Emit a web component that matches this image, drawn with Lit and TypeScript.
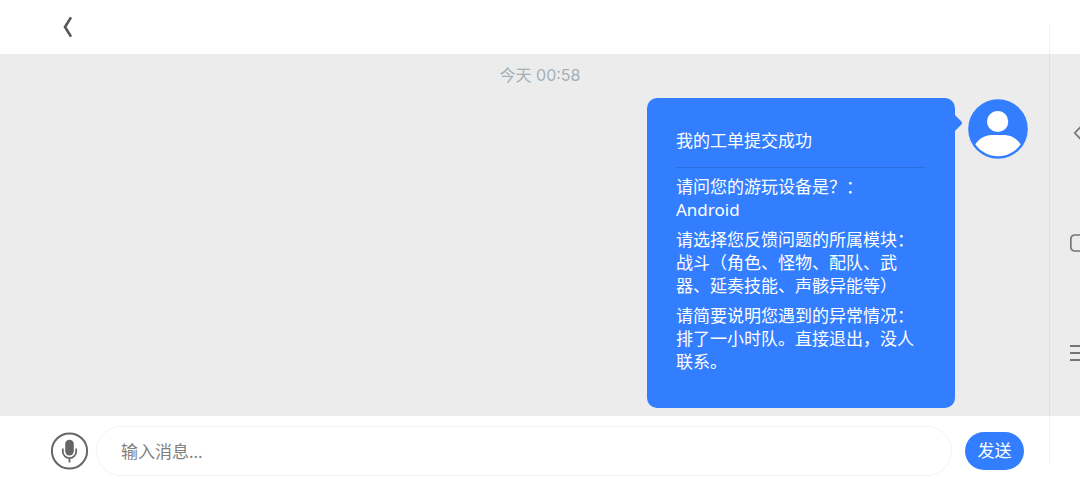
import { LitElement, html, css } from "lit";
import { customElement, state } from "lit/decorators.js";

interface Answer {
  question: string;
  value: string;
}

@customElement("ticket-bubble")
class TicketBubble extends LitElement {
  static styles = css`
    :host {
      display: block;
      position: relative;
      box-sizing: border-box;
      width: 308px;
      padding: 30px 29px 35px;
      border-radius: 10px;
      background: #337eff;
      color: #fff;
      font-size: 17px;
    }
    .tail {
      position: absolute;
      left: 100%;
      top: 16px;
      margin-left: -1px;
      display: block;
    }
    .title {
      margin: 0;
      padding-bottom: 13px;
      border-bottom: 1px solid #2d70e4;
      font-size: 17px;
      font-weight: 400;
      line-height: 26px;
    }
    .answers {
      display: flex;
      flex-direction: column;
      gap: 7px;
      margin: 0;
      padding-top: 7px;
      line-height: 23px;
    }
    .question,
    .value {
      margin: 0;
    }
  `;

  private answers: Answer[] = [
    { question: "请问您的游玩设备是？：", value: "Android" },
    {
      question: "请选择您反馈问题的所属模块：",
      value: "战斗（角色、怪物、配队、武器、延奏技能、声骸异能等）",
    },
    {
      question: "请简要说明您遇到的异常情况：",
      value: "排了一小时队。直接退出，没人联系。",
    },
  ];

  render() {
    return html`
      <svg class="tail" width="9" height="18" viewBox="0 0 9 18" aria-hidden="true">
        <path d="M0 0 7.4 7.4Q9 9 7.4 10.6L0 18Z" fill="#337eff" />
      </svg>
      <h2 class="title">我的工单提交成功</h2>
      <dl class="answers">
        ${this.answers.map(
          (a) => html`<div>
            <dt class="question">${a.question}</dt>
            <dd class="value">${a.value}</dd>
          </div>`
        )}
      </dl>
    `;
  }
}

@customElement("app-root")
class AppRoot extends LitElement {
  static styles = css`
    :host {
      display: flex;
      flex-direction: column;
      position: relative;
      min-height: 100vh;
      overflow: hidden;
      background: #fff;
      font-family: "Noto Sans", "Noto Sans CJK SC", sans-serif;
    }
    button {
      padding: 0;
      border: 0;
      background: none;
      font: inherit;
      cursor: pointer;
    }
    svg {
      display: block;
    }
    .header {
      display: flex;
      align-items: center;
      height: 54px;
      padding: 0 52px;
    }
    .back {
      display: grid;
      place-items: center;
      width: 32px;
      height: 32px;
    }
    .chat {
      flex: 1;
      padding: 11px 52px 8px;
      background: #ececec;
    }
    .time {
      display: block;
      margin-bottom: 13px;
      text-align: center;
      color: #a3afb7;
      font-family: Inter, "Noto Sans CJK SC", sans-serif;
      font-size: 16px;
      line-height: 20px;
    }
    .message {
      display: flex;
      justify-content: flex-end;
      align-items: flex-start;
      gap: 13px;
    }
    .avatar {
      flex: none;
      margin-top: 1px;
    }
    .composer {
      display: flex;
      align-items: center;
      height: 70px;
      padding: 0 56px 0 51px;
    }
    .mic {
      flex: none;
      margin-right: 7px;
    }
    .field {
      flex: 1;
      min-width: 0;
      box-sizing: border-box;
      height: 50px;
      margin-right: 13px;
      padding: 0 24px;
      border: 1px solid #f3f3f3;
      border-radius: 25px;
      outline: none;
      background: #fff;
      color: #333;
      font-family: inherit;
      font-size: 17px;
    }
    .field::placeholder {
      color: #808080;
      opacity: 1;
    }
    .send {
      flex: none;
      width: 59px;
      height: 38px;
      border-radius: 19px;
      background: #337eff;
      color: #fff;
      font-size: 17px;
      line-height: 24px;
    }
    .rail {
      position: absolute;
      top: 25px;
      right: 0;
      bottom: 23px;
      box-sizing: border-box;
      width: 31px;
      display: flex;
      flex-direction: column;
      justify-content: center;
      align-items: flex-end;
      gap: 90px;
      padding-bottom: 3px;
      border-left: 1px solid rgba(0, 0, 0, 0.05);
    }
  `;

  @state() private draft = "";

  private onInput(e: Event) {
    this.draft = (e.target as HTMLInputElement).value;
  }

  private send() {
    this.draft = "";
  }

  render() {
    return html`
      <header class="header">
        <button class="back" aria-label="返回">
          <svg width="12" height="22" viewBox="0 0 12 22">
            <path d="M9 1.4 3 11l6 9.6" fill="none" stroke="#555" stroke-width="2.6" />
          </svg>
        </button>
      </header>

      <main class="chat">
        <time class="time">今天 00:58</time>
        <div class="message">
          <ticket-bubble></ticket-bubble>
          <svg class="avatar" width="60" height="60" viewBox="0 0 60 60" aria-hidden="true">
            <circle cx="30" cy="30" r="29.8" fill="#337eff" />
            <circle cx="29.7" cy="22.5" r="10.6" fill="#fff" />
            <path
              d="M7.3 45.2C11.5 39.5 17 36 23.5 36H36.5C43 36 48.5 39.5 52.7 45.2A27.3 27.3 0 0 1 7.3 45.2Z"
              fill="#fff"
            />
          </svg>
        </div>
      </main>

      <footer class="composer">
        <button class="mic" aria-label="语音">
          <svg width="38" height="38" viewBox="0 0 38 38">
            <circle cx="18.5" cy="19" r="17.6" fill="none" stroke="#666" stroke-width="2" />
            <rect x="14.2" y="7.8" width="8.6" height="15.6" rx="4.2" fill="#666" />
            <path
              d="M11.8 16.5v3a6.7 6.7 0 0 0 13.4 0v-3M18.5 26.5v4"
              fill="none"
              stroke="#666"
              stroke-width="1.8"
            />
          </svg>
        </button>
        <input
          class="field"
          type="text"
          aria-label="输入消息"
          placeholder="输入消息..."
          .value=${this.draft}
          @input=${this.onInput}
        />
        <button class="send" @click=${this.send}>发送</button>
      </footer>

      <nav class="rail" aria-label="系统导航">
        <button aria-label="后退">
          <svg width="10" height="20" viewBox="0 0 10 20">
            <path d="M11 3.5 4.8 10 11 16.5" fill="none" stroke="#757575" stroke-width="1.7" />
          </svg>
        </button>
        <button aria-label="主屏幕">
          <svg width="10" height="20" viewBox="0 0 10 20">
            <rect x="0.8" y="2" width="16" height="16" rx="4" fill="none" stroke="#757575" stroke-width="1.7" />
          </svg>
        </button>
        <button aria-label="最近任务">
          <svg width="10" height="20" viewBox="0 0 10 20">
            <path d="M0 3h10M0 10h10M0 17h10" fill="none" stroke="#757575" stroke-width="1.8" />
          </svg>
        </button>
      </nav>
    `;
  }
}
